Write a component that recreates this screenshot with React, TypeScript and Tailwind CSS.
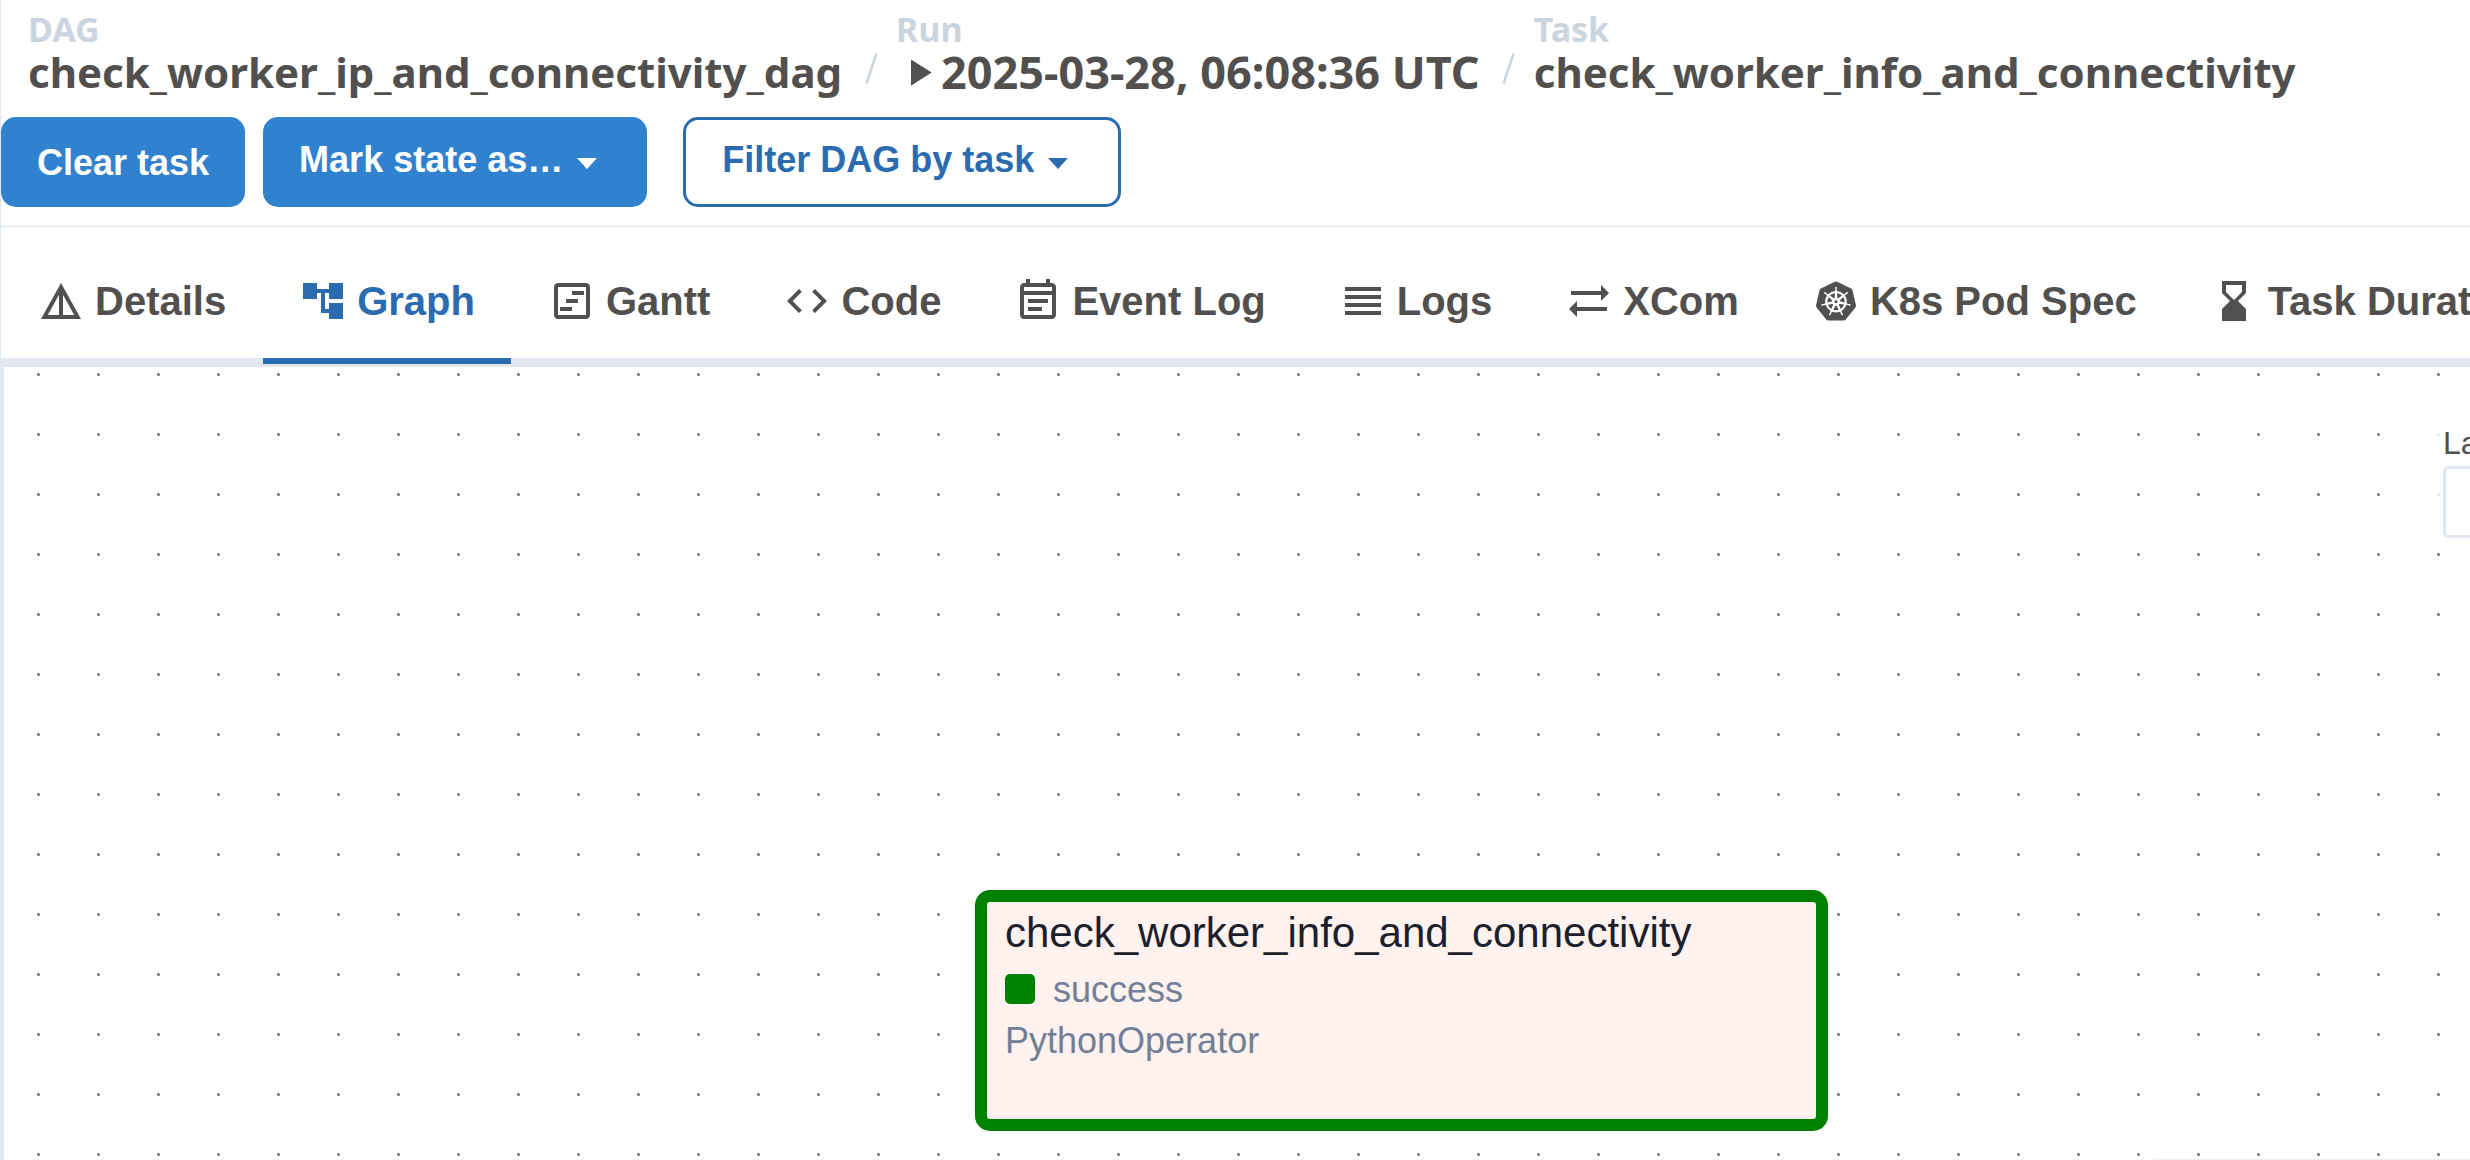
import type { ReactNode } from "react";
import {
  MdAccountTree,
  MdCode,
  MdDetails,
  MdHourglassBottom,
  MdOutlineEventNote,
  MdOutlineViewTimeline,
  MdPlayArrow,
  MdReorder,
  MdSyncAlt,
} from "react-icons/md";
import { SiKubernetes } from "react-icons/si";

function Crumb({ label, children }: { label: string; children: ReactNode }) {
  return (
    <li className="flex flex-col">
      <span className="h-[35px] text-[34px] leading-[35px] text-[#cbd5e0]">{label}</span>
      <a href="#" className="flex h-[50px] items-center text-[42px] leading-[50px] text-[#51504f]">
        {children}
      </a>
    </li>
  );
}

function Slash() {
  return (
    <li aria-hidden="true" className="mt-[41px] flex w-[54px] justify-center pl-1 text-[#cbd5e0]">
      <svg width="13" height="31" viewBox="0 0 13 31">
        <path d="M1.5 30.500 11.500 .5" stroke="currentColor" strokeWidth="2.500" fill="none" />
      </svg>
    </li>
  );
}

function Caret() {
  return (
    <svg className="mt-[6px]" width="20" height="11" viewBox="0 0 20 11" fill="currentColor" aria-hidden="true">
      <path d="M0 0h20L10 11z" />
    </svg>
  );
}

const tabs = [
  { name: "Details", Icon: MdDetails },
  { name: "Graph", Icon: MdAccountTree },
  { name: "Gantt", Icon: MdOutlineViewTimeline },
  { name: "Code", Icon: MdCode },
  { name: "Event Log", Icon: MdOutlineEventNote },
  { name: "Logs", Icon: MdReorder },
  { name: "XCom", Icon: MdSyncAlt },
  { name: "K8s Pod Spec", Icon: SiKubernetes, small: true },
  { name: "Task Duration", Icon: MdHourglassBottom },
];

export default function App() {
  return (
    <div className="flex min-h-screen flex-col overflow-hidden bg-white font-['Liberation_Sans',Arial,sans-serif] text-[#51504f]">
      <header className="border-b-3 border-l border-b-[#edf2f7] border-l-[#e2e8f0] pb-[18px]">
        <nav aria-label="Breadcrumb" className="pl-[27px] pt-3">
          <ol className="flex whitespace-nowrap font-['Noto_Sans',sans-serif] font-bold">
            <Crumb label="DAG">check_worker_ip_and_connectivity_dag</Crumb>
            <Slash />
            <Crumb label="Run">
              <MdPlayArrow className="size-[45px]" aria-hidden="true" />
              <span className="text-[45px]">2025-03-28, 06:08:36 UTC</span>
            </Crumb>
            <Slash />
            <Crumb label="Task">check_worker_info_and_connectivity</Crumb>
          </ol>
        </nav>
        <div className="mt-5 flex text-[36px] font-bold">
          <button className="mr-[18px] h-[90px] rounded-[15px] bg-[#3182ce] px-9 pt-[2px] text-white">Clear task</button>
          <button className="mr-9 flex h-[90px] items-center gap-[14px] rounded-[15px] bg-[#3182ce] pb-1 pl-9 pr-[50px] text-white">
            Mark state as…
            <Caret />
          </button>
          <button className="flex h-[90px] items-center gap-[14px] rounded-[15px] border-3 border-[#2b6cb0] pb-1 pl-9 pr-[50px] text-[#2b6cb0]">
            Filter DAG by task
            <Caret />
          </button>
        </div>
      </header>

      <div role="tablist" className="flex h-[139px] gap-px border-b-9 border-l border-[#e2e8f0]">
        {tabs.map(({ name, Icon, small }) => (
          <button
            key={name}
            role="tab"
            aria-selected={name === "Graph"}
            className="-mb-[6px] flex shrink-0 items-center gap-[10px] whitespace-nowrap border-b-6 border-transparent px-9 pt-4 text-[40px] font-bold aria-selected:border-[#2b6cb0] aria-selected:text-[#2b6cb0]"
          >
            <Icon className={small ? "m-1 size-10" : "size-12"} aria-hidden="true" />
            {name}
          </button>
        ))}
      </div>

      <main className="relative grow overflow-hidden border-l-4 border-[#e2e8f0]">
        <svg className="absolute inset-0 size-full" aria-hidden="true">
          <defs>
            <pattern id="dots" width="60" height="60" patternUnits="userSpaceOnUse">
              <rect x="33" y="6" width="3" height="3" rx="1.200" fill="#81818a" />
            </pattern>
          </defs>
          <rect width="100%" height="100%" fill="url(#dots)" />
        </svg>
        <article className="absolute left-[971px] top-[523px] h-[241px] w-[853px] rounded-[15px] border-12 border-[#008000] bg-[#fff2ef] px-[18px] pt-[7px]">
          <h2 className="text-[42px] leading-[48px] text-[#1a202c]">check_worker_info_and_connectivity</h2>
          <p className="flex h-16 items-center gap-[18px] text-[36px] text-[#718096]">
            <span className="size-[30px] rounded-[5px] bg-[#008000]" />
            <span className="pt-[2px]">success</span>
          </p>
          <p className="text-[36px] leading-10 text-[#718096]">PythonOperator</p>
        </article>

        <div className="absolute -right-[370px] top-[48px] w-[406px] bg-white/80 pl-[9px] pt-[5px]">
          <label htmlFor="layout" className="block text-[32px] leading-[46px]">
            Layout:
          </label>
          <select id="layout" className="h-[72px] w-[380px] appearance-none rounded-[5px] border-3 border-[#e2e8f0] bg-white px-8 text-[32px]">
            <option>Left -&gt; Right</option>
          </select>
        </div>
        <div className="absolute bottom-0 right-0 h-px w-[316px] bg-[#f0f0f0]" />
      </main>
    </div>
  );
}
